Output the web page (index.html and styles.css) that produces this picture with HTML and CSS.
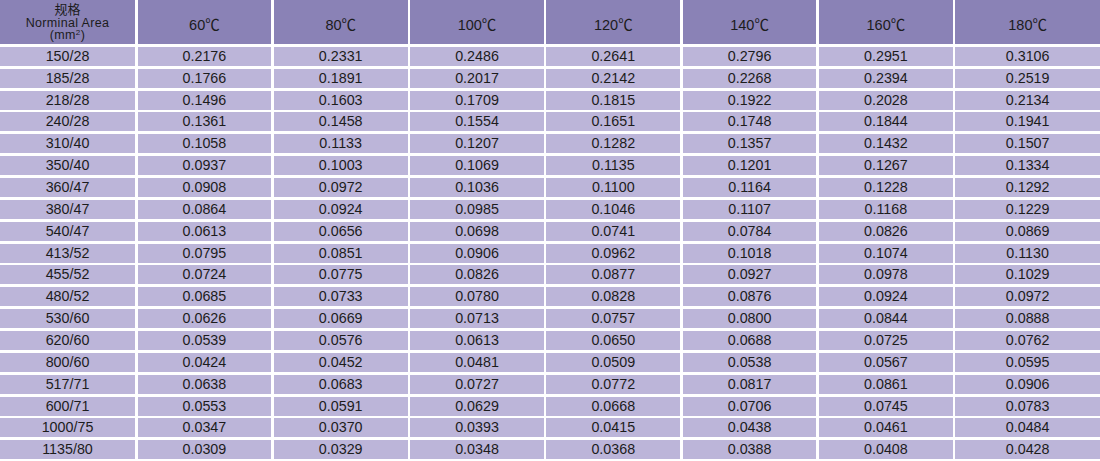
FILE: index.html
```html
<!DOCTYPE html>
<html lang="zh">
<head>
<meta charset="utf-8">
<link rel="stylesheet" href="styles.css">
</head>
<body>
<div class="table">
  <div class="th th-first"><span class="zh">规格</span><span>Norminal Area</span><span>(mm<sup>2</sup>)</span></div>
  <div class="th">60℃</div><div class="th">80℃</div><div class="th">100℃</div><div class="th">120℃</div><div class="th">140℃</div><div class="th">160℃</div><div class="th">180℃</div>

  <div class="td">150/28</div><div class="td">0.2176</div><div class="td">0.2331</div><div class="td">0.2486</div><div class="td">0.2641</div><div class="td">0.2796</div><div class="td">0.2951</div><div class="td">0.3106</div>
  <div class="td">185/28</div><div class="td">0.1766</div><div class="td">0.1891</div><div class="td">0.2017</div><div class="td">0.2142</div><div class="td">0.2268</div><div class="td">0.2394</div><div class="td">0.2519</div>
  <div class="td">218/28</div><div class="td">0.1496</div><div class="td">0.1603</div><div class="td">0.1709</div><div class="td">0.1815</div><div class="td">0.1922</div><div class="td">0.2028</div><div class="td">0.2134</div>
  <div class="td">240/28</div><div class="td">0.1361</div><div class="td">0.1458</div><div class="td">0.1554</div><div class="td">0.1651</div><div class="td">0.1748</div><div class="td">0.1844</div><div class="td">0.1941</div>
  <div class="td">310/40</div><div class="td">0.1058</div><div class="td">0.1133</div><div class="td">0.1207</div><div class="td">0.1282</div><div class="td">0.1357</div><div class="td">0.1432</div><div class="td">0.1507</div>
  <div class="td">350/40</div><div class="td">0.0937</div><div class="td">0.1003</div><div class="td">0.1069</div><div class="td">0.1135</div><div class="td">0.1201</div><div class="td">0.1267</div><div class="td">0.1334</div>
  <div class="td">360/47</div><div class="td">0.0908</div><div class="td">0.0972</div><div class="td">0.1036</div><div class="td">0.1100</div><div class="td">0.1164</div><div class="td">0.1228</div><div class="td">0.1292</div>
  <div class="td">380/47</div><div class="td">0.0864</div><div class="td">0.0924</div><div class="td">0.0985</div><div class="td">0.1046</div><div class="td">0.1107</div><div class="td">0.1168</div><div class="td">0.1229</div>
  <div class="td">540/47</div><div class="td">0.0613</div><div class="td">0.0656</div><div class="td">0.0698</div><div class="td">0.0741</div><div class="td">0.0784</div><div class="td">0.0826</div><div class="td">0.0869</div>
  <div class="td">413/52</div><div class="td">0.0795</div><div class="td">0.0851</div><div class="td">0.0906</div><div class="td">0.0962</div><div class="td">0.1018</div><div class="td">0.1074</div><div class="td">0.1130</div>
  <div class="td">455/52</div><div class="td">0.0724</div><div class="td">0.0775</div><div class="td">0.0826</div><div class="td">0.0877</div><div class="td">0.0927</div><div class="td">0.0978</div><div class="td">0.1029</div>
  <div class="td">480/52</div><div class="td">0.0685</div><div class="td">0.0733</div><div class="td">0.0780</div><div class="td">0.0828</div><div class="td">0.0876</div><div class="td">0.0924</div><div class="td">0.0972</div>
  <div class="td">530/60</div><div class="td">0.0626</div><div class="td">0.0669</div><div class="td">0.0713</div><div class="td">0.0757</div><div class="td">0.0800</div><div class="td">0.0844</div><div class="td">0.0888</div>
  <div class="td">620/60</div><div class="td">0.0539</div><div class="td">0.0576</div><div class="td">0.0613</div><div class="td">0.0650</div><div class="td">0.0688</div><div class="td">0.0725</div><div class="td">0.0762</div>
  <div class="td">800/60</div><div class="td">0.0424</div><div class="td">0.0452</div><div class="td">0.0481</div><div class="td">0.0509</div><div class="td">0.0538</div><div class="td">0.0567</div><div class="td">0.0595</div>
  <div class="td">517/71</div><div class="td">0.0638</div><div class="td">0.0683</div><div class="td">0.0727</div><div class="td">0.0772</div><div class="td">0.0817</div><div class="td">0.0861</div><div class="td">0.0906</div>
  <div class="td">600/71</div><div class="td">0.0553</div><div class="td">0.0591</div><div class="td">0.0629</div><div class="td">0.0668</div><div class="td">0.0706</div><div class="td">0.0745</div><div class="td">0.0783</div>
  <div class="td">1000/75</div><div class="td">0.0347</div><div class="td">0.0370</div><div class="td">0.0393</div><div class="td">0.0415</div><div class="td">0.0438</div><div class="td">0.0461</div><div class="td">0.0484</div>
  <div class="td">1135/80</div><div class="td">0.0309</div><div class="td">0.0329</div><div class="td">0.0348</div><div class="td">0.0368</div><div class="td">0.0388</div><div class="td">0.0408</div><div class="td">0.0428</div>
</div>
</body>
</html>
```

FILE: styles.css
```css
html, body {
  margin: 0;
  padding: 0;
  background: #ffffff;
}
body {
  width: 1100px;
  height: 461px;
  overflow: hidden;
  font-family: "Liberation Sans", Arial, "Noto Sans CJK SC", sans-serif;
  color: #1c1c1c;
}
.table {
  display: grid;
  grid-template-columns: 135px repeat(6, 133.8px) 1fr;
  grid-template-rows: 44px;
  grid-auto-rows: 19px;
  column-gap: 2.5px;
  row-gap: 2.87px;
}
.th {
  background: #8a82b6;
  display: flex;
  align-items: center;
  justify-content: center;
  font-size: 14.5px;
  padding-top: 3px;
  box-sizing: border-box;
}
.th-first {
  flex-direction: column;
  font-size: 12.5px;
  line-height: 12.6px;
  padding-top: 2px;
  letter-spacing: 0.35px;
}
.th-first .zh {
  font-size: 13px;
  letter-spacing: 0;
}
.th-first sup {
  font-size: 8px;
  line-height: 0;
  vertical-align: 4px;
}
.td {
  background: #bcb5d9;
  display: flex;
  align-items: center;
  justify-content: center;
  font-size: 14.3px;
  line-height: 19px;
}
```
